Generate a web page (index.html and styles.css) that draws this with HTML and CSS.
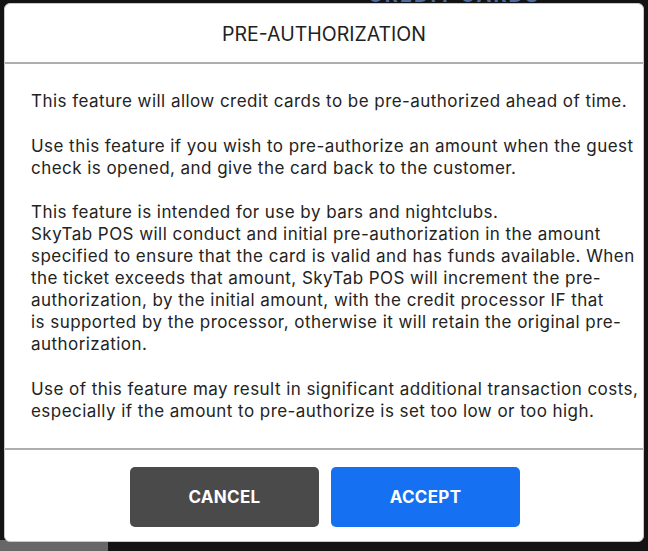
FILE: index.html
```html
<!DOCTYPE html>
<html>
<head>
<meta charset="utf-8">
<link rel="stylesheet" href="styles.css">
</head>
<body>
<div class="behind">CREDIT CARDS</div>
<div class="patch"></div>
<div class="modal">
  <div class="modal-header">PRE-AUTHORIZATION</div>
  <div class="modal-body">
    <p>This feature will allow credit cards to be pre-authorized ahead of time.</p>
    <p>Use this feature if you wish to pre-authorize an amount when the guest<br>check is opened, and give the card back to the customer.</p>
    <p>This feature is intended for use by bars and nightclubs.<br>SkyTab POS will conduct and initial pre-authorization in the amount<br>specified to ensure that the card is valid and has funds available. When<br>the ticket exceeds that amount, SkyTab POS will increment the pre-<br>authorization, by the initial amount, with the credit processor IF that<br>is supported by the processor, otherwise it will retain the original pre-<br>authorization.</p>
    <p>Use of this feature may result in significant additional transaction costs,<br>especially if the amount to pre-authorize is set too low or too high.</p>
  </div>
  <div class="modal-footer">
    <button class="btn btn-cancel">CANCEL</button>
    <button class="btn btn-accept">ACCEPT</button>
  </div>
</div>
</body>
</html>
```
FILE: styles.css
```css
html, body {
  margin: 0;
  padding: 0;
}
body {
  background: #131313;
  width: 648px;
  height: 551px;
  overflow: hidden;
  position: relative;
  font-family: Inter, "Liberation Sans", sans-serif;
  color: #232323;
}
.behind {
  position: absolute;
  left: 368px;
  top: -17px;
  font: 700 20px Inter, sans-serif;
  letter-spacing: 2px;
  color: #4a6aa0;
}
.patch {
  position: absolute;
  left: 0;
  top: 540px;
  width: 108px;
  height: 11px;
  background: #676767;
}
.modal {
  position: relative;
  z-index: 1;
  margin: 3px 0 0 4px;
  width: 640px;
  height: 539px;
  box-sizing: border-box;
  background: #fff;
  border-radius: 6px;
  border: 1px solid #c9c9c9;
  display: flex;
  flex-direction: column;
  overflow: hidden;
}
.modal-header {
  height: 57px;
  flex: none;
  display: flex;
  align-items: center;
  justify-content: center;
  font-size: 19.5px;
  font-weight: 400;
  color: #222;
  border-bottom: 2px solid #aeaeae;
  padding-top: 1px;
}
.modal-body {
  flex: 1;
  padding: 26px 0 0 26px;
  font-size: 17px;
  line-height: 22px;
  letter-spacing: 0.45px;
  white-space: nowrap;
  border-bottom: 2px solid #aeaeae;
}
.modal-body p {
  margin: 0 0 22.5px 0;
}
.modal-footer {
  height: 91px;
  flex: none;
  display: flex;
  justify-content: center;
  align-items: flex-start;
  gap: 12px;
  padding-top: 17px;
  box-sizing: border-box;
}
.btn {
  width: 189px;
  height: 60px;
  border: none;
  border-radius: 5px;
  font-family: Inter, "Liberation Sans", sans-serif;
  font-weight: 700;
  font-size: 17px;
  letter-spacing: 0.3px;
  color: #fff;
  padding: 0;
}
.btn-cancel {
  background: #4a4a4a;
  margin-left: 2px;
}
.btn-accept {
  background: #1570f2;
}
```
